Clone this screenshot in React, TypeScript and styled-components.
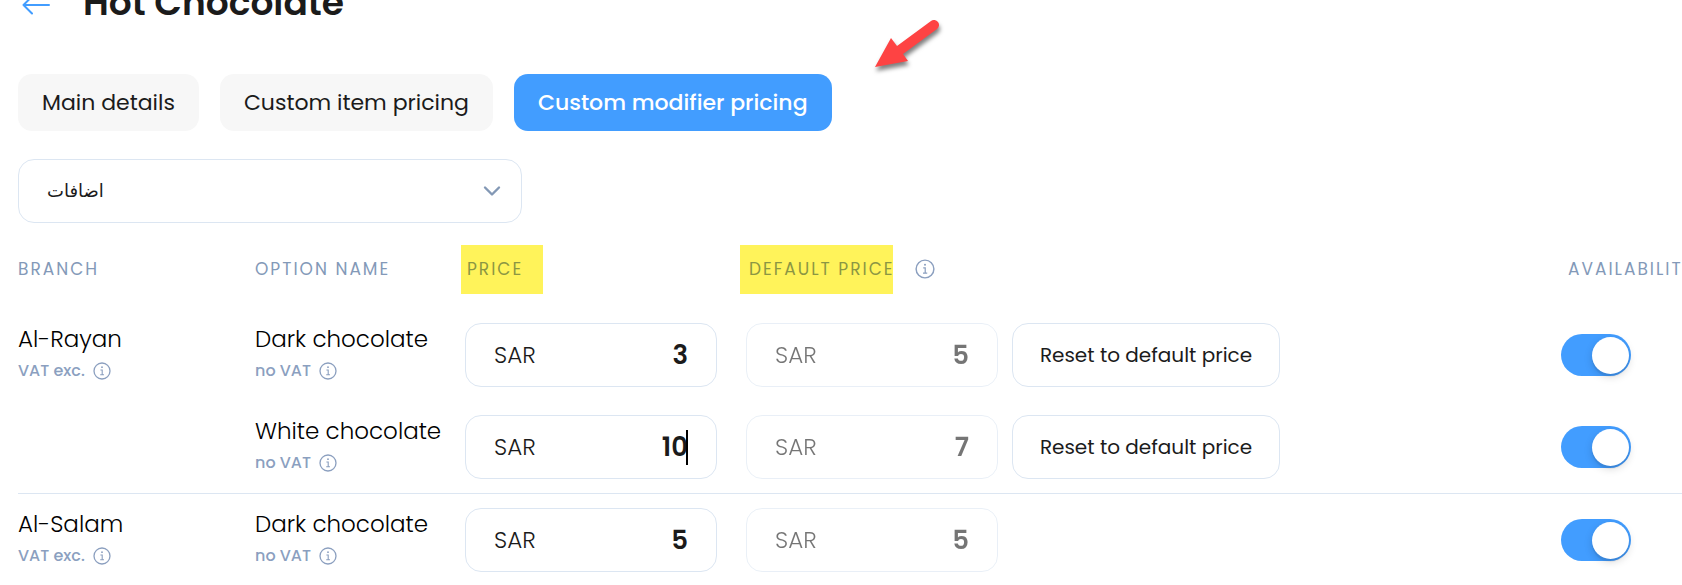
import React from 'react';
import styled, { createGlobalStyle } from 'styled-components';

const GlobalStyle = createGlobalStyle`
  *, *::before, *::after { box-sizing: border-box; }
  body {
    margin: 0;
    background: #fff;
    color: #1b1b1b;
    font-family: Poppins, Inter, "Noto Sans", sans-serif;
  }
  button, input, select { font: inherit; color: inherit; }
`;

const Page = styled.main`
  position: relative;
  overflow: hidden;
  padding-left: 18px;
`;

const Header = styled.header`
  display: flex;
  align-items: center;
  gap: 29px;
  height: 40px;
  margin-top: -17px;
`;

const BackLink = styled.a`
  display: flex;
  width: 36px;
  padding: 4px 0 0 4px;
  color: #429dff;
`;

const Title = styled.h1`
  margin: 0;
  font-size: 36px;
  line-height: 40px;
  font-weight: 600;
  white-space: nowrap;
`;

const Tabs = styled.nav`
  display: flex;
  gap: 21px;
  margin-top: 51px;
`;

const Tab = styled.button<{ $active?: boolean }>`
  height: 57px;
  padding: 0 24px;
  border: 0;
  border-radius: 14px;
  background: ${(p) => (p.$active ? '#429dff' : '#f7f7f7')};
  color: ${(p) => (p.$active ? '#fff' : '#1b1b1b')};
  font-size: 22px;
  font-weight: ${(p) => (p.$active ? 500 : 400)};
  white-space: nowrap;
`;

const SelectBox = styled.div`
  display: grid;
  align-items: center;
  width: 504px;
  margin-top: 28px;
  > * { grid-area: 1 / 1; }
  > svg { justify-self: end; margin-right: 21px; pointer-events: none; }
`;

const Select = styled.select`
  appearance: none;
  width: 100%;
  height: 64px;
  padding: 0 60px 0 28px;
  border: 1px solid #dce6f2;
  border-radius: 16px;
  background: #fff;
  font-family: "Liberation Sans", "DejaVu Sans", sans-serif;
  font-size: 18px;
`;

const Table = styled.table`
  width: 100%;
  margin-top: 6px;
  table-layout: fixed;
  border-collapse: separate;
  border-spacing: 0;
`;

const Column = styled.col<{ $width?: number }>`
  width: ${(p) => (p.$width ? `${p.$width}px` : 'auto')};
`;

const HeadCell = styled.th<{ $indent?: number }>`
  height: 80px;
  padding: 0 0 0 ${(p) => p.$indent ?? 0}px;
  color: #8399b8;
  font-size: 17px;
  font-weight: 400;
  letter-spacing: 2px;
  text-align: left;
  white-space: nowrap;
`;

const HeadLine = styled.div`
  display: flex;
  align-items: center;
  gap: 22px;
`;

const Highlight = styled.mark<{ $width: number; $indent: number }>`
  display: block;
  flex: none;
  width: ${(p) => p.$width}px;
  padding-left: ${(p) => p.$indent}px;
  background: #fff35a;
  color: #8b9643;
  line-height: 49px;
`;

const Cell = styled.td<{ $indent?: number }>`
  height: 92px;
  padding: 0 0 0 ${(p) => p.$indent ?? 0}px;
`;

const Group = styled.tbody`
  & + & td { border-top: 1px solid #dce6f2; height: 93px; }
`;

const Name = styled.div`
  color: #000;
  font-size: 23px;
  line-height: 32px;
  font-weight: 300;
  white-space: nowrap;
`;

const Tax = styled.div`
  display: flex;
  align-items: center;
  gap: 8px;
  color: #8b9fbf;
  font-size: 16px;
  line-height: 32px;
  font-weight: 500;
`;

const PriceField = styled.label<{ $muted?: boolean }>`
  display: flex;
  align-items: center;
  width: 252px;
  height: 64px;
  padding: 0 28px;
  border: 1px solid #dce6f2;
  border-radius: 16px;
  font-size: 23px;
  font-weight: 300;
  opacity: ${(p) => (p.$muted ? 0.6 : 1)};
`;

const PriceInput = styled.input`
  flex: 1;
  min-width: 0;
  padding: 0;
  border: 0;
  outline: 0;
  background: transparent;
  font-size: 26px;
  font-weight: 600;
  text-align: right;
`;

const Caret = styled.span`
  width: 2px;
  height: 35px;
  margin-left: -2px;
  background: #000;
`;

const ResetButton = styled.button`
  width: 268px;
  height: 64px;
  padding: 0;
  border: 1px solid #dce6f2;
  border-radius: 16px;
  background: #fff;
  font-size: 20px;
  white-space: nowrap;
`;

const Switch = styled.input`
  appearance: none;
  display: flex;
  align-items: center;
  justify-content: flex-start;
  width: 70px;
  height: 42px;
  margin: 0;
  padding: 0 2px;
  border-radius: 21px;
  background: #d5dce6;
  &::before {
    content: '';
    width: 37px;
    height: 37px;
    border-radius: 50%;
    background: #fff;
    box-shadow: 0 3px 8px rgba(0, 0, 0, 0.15), 0 3px 1px rgba(0, 0, 0, 0.06);
  }
  &:checked { justify-content: flex-end; background: #429dff; }
`;

const Pointer = styled.svg`
  position: absolute;
  top: 14px;
  left: 868px;
  filter: drop-shadow(1px 4px 2px rgba(0, 0, 0, 0.5));
`;

const InfoIcon = ({ size = 18 }: { size?: number }) => (
  <svg width={size} height={size} viewBox="0 0 18 18" fill="none" stroke="#8b9fbf" aria-hidden="true">
    <circle cx="9" cy="9" r="8" strokeWidth="1.3" />
    <path d="M7.4 8H9.2V12.6M7.2 12.8H11" strokeWidth="1.1" />
    <circle cx="9" cy="5.2" r="0.9" fill="#8b9fbf" stroke="none" />
  </svg>
);

type Option = { name: string; price: string; base: string; editing?: boolean };
const branches: { name: string; options: Option[] }[] = [
  {
    name: 'Al-Rayan',
    options: [
      { name: 'Dark chocolate', price: '3', base: '5' },
      { name: 'White chocolate', price: '10', base: '7', editing: true },
    ],
  },
  { name: 'Al-Salam', options: [{ name: 'Dark chocolate', price: '5', base: '5' }] },
];

export default function App() {
  return (
    <>
      <GlobalStyle />
      <Page>
        <Header>
          <BackLink href="#" aria-label="Back">
            <svg width="28" height="20" viewBox="0 0 28 20" fill="none" stroke="currentColor" strokeWidth="2" strokeLinecap="round" strokeLinejoin="round" aria-hidden="true">
              <path d="M27 10H1.5M10 1.5L1.5 10L10 18.5" />
            </svg>
          </BackLink>
          <Title>Hot Chocolate</Title>
        </Header>
        <Tabs>
          <Tab type="button">Main details</Tab>
          <Tab type="button">Custom item pricing</Tab>
          <Tab type="button" $active>Custom modifier pricing</Tab>
        </Tabs>
        <SelectBox>
          <Select aria-label="Modifier" defaultValue="addons">
            <option value="addons">اضافات</option>
          </Select>
          <svg width="18" height="12" viewBox="0 0 18 12" fill="none" stroke="#8398b5" strokeWidth="2.4" strokeLinecap="round" strokeLinejoin="round" aria-hidden="true">
            <path d="M2 2.5L9 9.5L16 2.5" />
          </svg>
        </SelectBox>
        <Table>
          <colgroup>
            <Column $width={237} />
            <Column $width={206} />
            <Column $width={279} />
            <Column $width={272} />
            <Column />
            <Column $width={121} />
          </colgroup>
          <thead>
            <tr>
              <HeadCell>BRANCH</HeadCell>
              <HeadCell>OPTION NAME</HeadCell>
              <HeadCell><Highlight $width={82} $indent={6}>PRICE</Highlight></HeadCell>
              <HeadCell>
                <HeadLine>
                  <Highlight $width={153} $indent={9}>DEFAULT PRICE</Highlight>
                  <InfoIcon size={20} />
                </HeadLine>
              </HeadCell>
              <HeadCell />
              <HeadCell $indent={7}>AVAILABILITY</HeadCell>
            </tr>
          </thead>
          {branches.map((branch) => (
            <Group key={branch.name}>
              {branch.options.map((option, i) => (
                <tr key={option.name}>
                  <Cell>
                    {i === 0 && (
                      <>
                        <Name>{branch.name}</Name>
                        <Tax>VAT exc. <InfoIcon /></Tax>
                      </>
                    )}
                  </Cell>
                  <Cell>
                    <Name>{option.name}</Name>
                    <Tax>no VAT <InfoIcon /></Tax>
                  </Cell>
                  <Cell $indent={4}>
                    <PriceField>
                      SAR
                      <PriceInput defaultValue={option.price} />
                      {option.editing && <Caret />}
                    </PriceField>
                  </Cell>
                  <Cell $indent={6}>
                    <PriceField $muted>
                      SAR
                      <PriceInput value={option.base} readOnly />
                    </PriceField>
                  </Cell>
                  <Cell>
                    {option.price !== option.base && (
                      <ResetButton type="button">Reset to default price</ResetButton>
                    )}
                  </Cell>
                  <Cell>
                    <Switch type="checkbox" role="switch" defaultChecked aria-label={`${option.name} available at ${branch.name}`} />
                  </Cell>
                </tr>
              ))}
            </Group>
          ))}
        </Table>
        <Pointer width="76" height="60" viewBox="0 0 76 60" aria-hidden="true">
          <path d="M7 53L23 24L29 32L63 7A5 5 0 0 1 69 15L35 40L40 47Z" fill="#fe4343" />
        </Pointer>
      </Page>
    </>
  );
}
